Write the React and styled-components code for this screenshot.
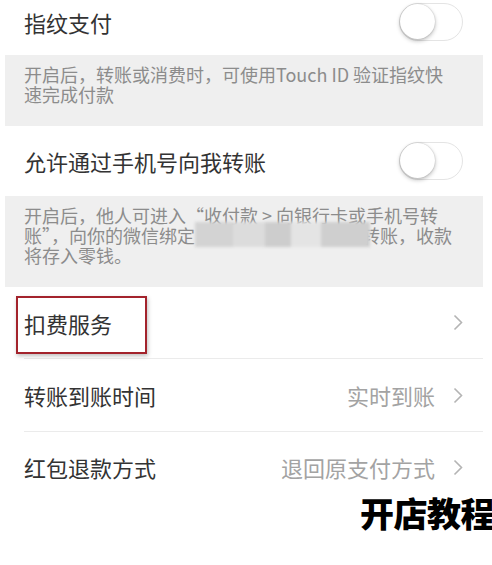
import React from 'react'
import styled, { createGlobalStyle } from 'styled-components'

const GlobalStyle = createGlobalStyle`
  html, body {
    margin: 0;
    padding: 0;
    background: #fff;
  }
  body {
    font-family: "Noto Sans CJK SC", "Noto Sans", sans-serif;
    overflow: hidden;
  }
`

const Page = styled.div`
  width: 492px;
  height: 565px;
  overflow: hidden;
  background: #fff;
`

const Container = styled.div`
  margin-left: 5px;
  width: 478px;
`

const SwitchRow = styled.div`
  box-sizing: border-box;
  height: ${p => p.$height}px;
  padding: 0 20px ${p => p.$bottom || 0}px 19px;
  display: flex;
  align-items: center;
  justify-content: space-between;
`

const Title = styled.span`
  font-size: 22px;
  color: #333;
  line-height: 1;
`

const Toggle = styled.div`
  box-sizing: border-box;
  width: 64px;
  height: 38px;
  border-radius: 19px;
  border: 1.5px solid #e4e4e4;
  background: #fff;
  position: relative;
  &::after {
    content: '';
    position: absolute;
    left: 0;
    top: 0;
    width: 35px;
    height: 35px;
    border-radius: 50%;
    background: #fff;
    box-shadow: 0 2px 4px rgba(0, 0, 0, 0.25), 0 0 1.5px rgba(0, 0, 0, 0.25);
  }
`

const Note = styled.div`
  background: #efefef;
  padding: 9px 20px 22px 19px;
  font-size: 18px;
  line-height: 20px;
  color: #8c8c8c;
  white-space: nowrap;
`

const Blur = styled.span`
  display: inline-block;
  position: relative;
  z-index: 1;
  width: 175px;
  height: 20px;
  margin-right: -8px;
  vertical-align: top;
  &::before {
    content: '';
    position: absolute;
    left: 0;
    right: 0;
    top: -3px;
    bottom: -2px;
    background: linear-gradient(90deg, #d3d3d3 0 22%, #dcdcdc 22% 40%, #cdcdcd 40% 55%, #e4e4e4 55% 72%, #cfcfcf 72% 100%);
    filter: blur(1.5px);
  }
`

const ListRow = styled.div`
  position: relative;
  height: ${p => p.$height}px;
  margin-left: 19px;
  padding-right: 20px;
  display: flex;
  align-items: center;
  justify-content: space-between;
  border-bottom: ${p => (p.$last ? 'none' : '1px solid #ebebeb')};
`

const Value = styled.span`
  display: flex;
  align-items: center;
  gap: 18px;
  font-size: 22px;
  color: #a3a3a3;
  line-height: 1;
`

const Highlight = styled.div`
  position: absolute;
  left: -8px;
  top: 9px;
  width: 131px;
  height: 58px;
  box-sizing: border-box;
  border: 2px solid #a3232c;
  box-shadow: 1px 2px 4px rgba(0, 0, 0, 0.25);
  pointer-events: none;
`

const Watermark = styled.div`
  text-align: right;
  margin-right: -2px;
  margin-top: -9px;
  font-size: 34px;
  line-height: 40px;
  font-weight: 900;
  color: #000;
  letter-spacing: -0.5px;
`

const Chevron = () => (
  <svg width="10" height="17" viewBox="0 0 10 17">
    <polyline points="1.5,1.5 8.5,8.5 1.5,15.5" fill="none" stroke="#b4b4b4" strokeWidth="1.6" />
  </svg>
)

export default function App() {
  return (
    <Page>
      <GlobalStyle />
      <Container>
        <SwitchRow $height={55} $bottom={12}>
          <Title>指纹支付</Title>
          <Toggle />
        </SwitchRow>
        <Note>
          开启后，转账或消费时，可使用Touch ID 验证指纹快
          <br />
          速完成付款
        </Note>
        <SwitchRow $height={70}>
          <Title>允许通过手机号向我转账</Title>
          <Toggle />
        </SwitchRow>
        <Note>
          开启后，他人可进入“收付款 &gt; 向银行卡或手机号转
          <br />
          账”，向你的微信绑定<Blur />转账，收款
          <br />
          将存入零钱。
        </Note>
        <ListRow $height={71}>
          <Highlight />
          <Title>扣费服务</Title>
          <Value>
            <Chevron />
          </Value>
        </ListRow>
        <ListRow $height={72}>
          <Title>转账到账时间</Title>
          <Value>
            实时到账
            <Chevron />
          </Value>
        </ListRow>
        <ListRow $height={70} $last>
          <Title>红包退款方式</Title>
          <Value>
            退回原支付方式
            <Chevron />
          </Value>
        </ListRow>
      </Container>
      <Watermark>开店教程</Watermark>
    </Page>
  )
}
